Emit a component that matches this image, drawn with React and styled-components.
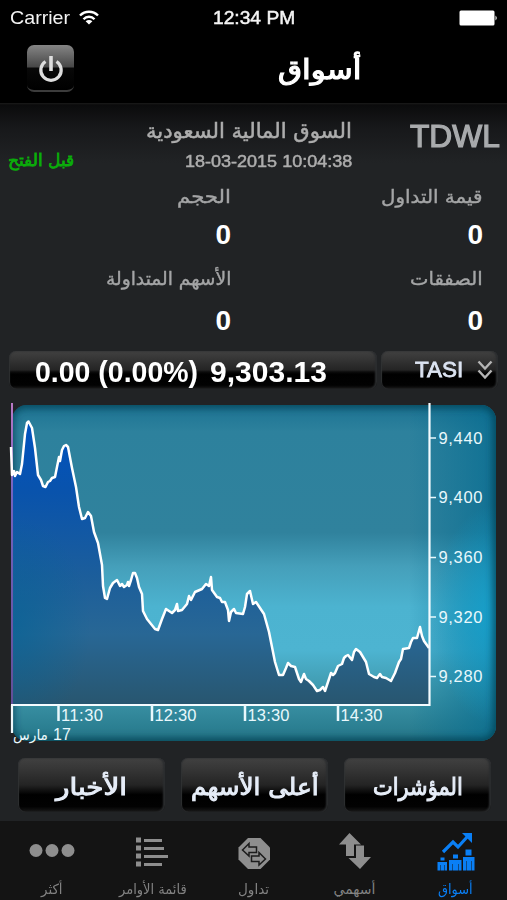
import React, { useLayoutEffect, useRef, useState } from "react";
import styled, { createGlobalStyle } from "styled-components";

const GlobalStyle = createGlobalStyle`
  * {
    box-sizing: border-box;
  }
  body {
    margin: 0;
    background: #212325;
    font-family: "Liberation Sans", "DejaVu Sans", sans-serif;
  }
`;

const Screen = styled.div`
  width: 507px;
  height: 900px;
  overflow: hidden;
  display: flex;
  flex-direction: column;
  background: #212325;
`;

const FitBox = styled.span`
  display: block;
  flex: none;
  width: ${({ $width }) => $width}px;
  white-space: nowrap;
  font-family: ${({ $arabic }) =>
    $arabic
      ? '"DejaVu Sans", sans-serif'
      : '"Liberation Sans", Arial, sans-serif'};
  font-size: ${({ $size }) => $size}px;
  font-weight: ${({ $bold }) => ($bold ? 700 : 400)};
  -webkit-text-stroke: ${({ $stroke }) => $stroke || 0}px currentColor;
`;

const FitInner = styled.span`
  display: inline-block;
  transform-origin: left center;
`;

// Squeezes a label horizontally so that it always takes the given width
const Fit = ({ width, size, bold, stroke, arabic, children }) => {
  const ref = useRef(null);
  const [scale, setScale] = useState(1);
  useLayoutEffect(() => {
    setScale(width / ref.current.offsetWidth);
  }, [width, children]);
  return (
    <FitBox
      dir="ltr"
      $width={width}
      $size={size}
      $bold={bold}
      $stroke={stroke}
      $arabic={arabic}
    >
      <FitInner
        ref={ref}
        dir={arabic ? "rtl" : "ltr"}
        style={{ transform: `scaleX(${scale})` }}
      >
        {children}
      </FitInner>
    </FitBox>
  );
};

const StatusBar = styled.div`
  display: grid;
  grid-template-columns: 1fr 82px 1fr;
  align-items: center;
  height: 36px;
  padding: 0 9px 0 10px;
  background: #000;
  color: #f4f4f4;
  line-height: 36px;
`;

const Carrier = styled.div`
  display: flex;
  align-items: center;
  gap: 9px;
`;

const Battery = styled.svg`
  justify-self: end;
`;

const NavBar = styled.div`
  display: flex;
  align-items: center;
  justify-content: space-between;
  height: 67px;
  padding: 0 145px 0 27px;
  background: #000;
  color: #fff;
  line-height: 67px;
`;

const PowerButton = styled.button`
  width: 47px;
  height: 47px;
  margin-bottom: 2px;
  padding: 0;
  border: 0;
  border-bottom: 2px solid #3c3c3c;
  border-radius: 7px;
  display: flex;
  align-items: center;
  justify-content: center;
  background: linear-gradient(#858585, #484848 48%, #080808 52%, #000);
`;

const Market = styled.div`
  height: 73px;
  padding: 13px 7px 0 8px;
  display: flex;
  background: linear-gradient(#1b1b1b 0, #0b0b0c 2px, #17181a 24px, #212325 60px);
  color: #adadad;
  line-height: 30px;
`;

const MarketState = styled.div`
  width: 139px;
  padding-top: 30px;
  color: #0cae0c;
`;

const MarketName = styled.div`
  width: 205px;
  display: flex;
  flex-direction: column;
  align-items: flex-end;
`;

const MarketCode = styled.div`
  margin-left: auto;
  color: #a9abad;
  line-height: 41px;
`;

const Stats = styled.div`
  height: 175px;
  padding: 0 24px 0 8px;
  display: grid;
  grid-template-columns: 223px 1fr;
  grid-template-rows: 82px 93px;
`;

const Stat = styled.div`
  display: flex;
  flex-direction: column;
  align-items: flex-end;
  color: #a4a5a6;
  line-height: 42px;
`;

const StatValue = styled.div`
  margin-top: ${({ $drop }) => $drop || 0}px;
  color: #fff;
  font-size: 28px;
  font-weight: 700;
  line-height: 33px;
`;

const Gloss = styled.div`
  border-radius: 7px;
  background: linear-gradient(
    #414141,
    #363636 20%,
    #242424 50%,
    #0c0c0c ${({ $break }) => $break || 55}%,
    #000 ${({ $break }) => ($break || 55) + 6}%,
    #020202 90%,
    #191919
  );
  box-shadow: inset 1px 0 1px #303234, inset -2px 0 2px #2b2d2f;
`;

const IndexRow = styled.div`
  height: 38px;
  padding: 0 9px;
  display: flex;
  gap: 4px;
`;

const IndexValue = styled(Gloss)`
  width: 368px;
  padding-left: 26px;
  display: flex;
  gap: 12px;
  color: #fff;
  line-height: 42px;
`;

const IndexPicker = styled(Gloss)`
  flex: 1;
  padding: 0 5px 0 34px;
  display: flex;
  align-items: center;
  justify-content: space-between;
  color: #dce4f2;
  line-height: 38px;
`;

const ChartSvg = styled.svg`
  display: block;
  flex: none;
`;

const Actions = styled.div`
  height: 63px;
  padding: 0 16px 9px 18px;
  display: flex;
  justify-content: space-between;
  background: #212325;
`;

const Action = styled(Gloss)`
  width: 147px;
  display: flex;
  justify-content: center;
  color: #e6edf8;
  line-height: 58px;
`;

const TabBar = styled.div`
  height: 79px;
  padding-top: 7px;
  display: grid;
  grid-template-columns: repeat(5, 101px);
  justify-content: center;
  background: #141414;
`;

const Tab = styled.div`
  display: flex;
  flex-direction: column;
  align-items: center;
  color: ${({ $active }) => ($active ? "#0a7ff5" : "#828282")};
  line-height: 24px;
  > svg {
    margin-bottom: 5px;
  }
`;

const STATS = [
  { label: "الحجم", width: 54, value: "0" },
  { label: "قيمة التداول", width: 102, value: "0" },
  { label: "الأسهم المتداولة", width: 125, value: "0", drop: 4 },
  { label: "الصفقات", width: 73, value: "0", drop: 4 },
];

const ACTIONS = [
  { label: "الأخبار", width: 71 },
  { label: "أعلى الأسهم", width: 127 },
  { label: "المؤشرات", width: 90 },
];

const MoreIcon = () => (
  <svg width="48" height="44" viewBox="0 0 48 44" fill="#8e8e8e">
    <circle cx="8" cy="22.500" r="6.500" />
    <circle cx="24" cy="22.500" r="6.500" />
    <circle cx="40" cy="22.500" r="6.500" />
  </svg>
);

const OrdersIcon = () => (
  <svg width="36" height="44" viewBox="0 0 36 44" fill="#8e8e8e">
    <path d="M1 9.500h5v5h-5zM1 17.500h5v5h-5zM1 25.500h5v5h-5zM1 33.500h5v5h-5z" />
    <path d="M9 11h18v3H9zM9 19h20v3H9zM9 27h24v3H9zM9 35h18v3H9z" />
  </svg>
);

const TradeIcon = () => (
  <svg width="34" height="44" viewBox="0 0 34 44">
    <path
      d="M11 10h12.500l9.500 9.500v12l-9.500 9.500H11L1.500 31.500v-12z"
      fill="#8e8e8e"
    />
    <g fill="#8e8e8e" stroke="#1c1c1c" strokeWidth="1.500">
      <path d="M5.500 22l6.500-6.500v3.500h7.500v5.500H12v3.500z" />
      <path d="M28.500 31l-6.500-6.500V28h-7.500v5.500H22V37z" />
    </g>
  </svg>
);

const SharesIcon = () => (
  <svg width="34" height="44" viewBox="0 0 34 44" fill="#8e8e8e">
    <path d="M11.500 5L23 16.500h-7V28H8V16.500H1z" />
    <path d="M18 17.500h8V29h7L22 41 10.500 30H18z" />
  </svg>
);

const MarketsIcon = () => (
  <svg width="38" height="44" viewBox="0 0 38 44" fill="#0a7ff5">
    <path
      d="M6 24l10-10 5 5L31 8"
      fill="none"
      stroke="#0a7ff5"
      strokeWidth="3.200"
    />
    <path d="M25 5h10v10z" />
    <path d="M3.500 29.500h4v3h-4zM16 26.500h5v4h-5zM28.500 21.500h6v6h-6z" />
    <path d="M.5 34H10v8.500H8V37h-.5v5.500h-4V37H3v5.500H.5z" />
    <path d="M12 32h12.500v10.500H22V36h-.5v6.500h-6V36H15v6.500h-3z" />
    <path d="M26 29h11.500v13.500H35V33h-.5v9.500h-5V33H29v9.500h-3z" />
  </svg>
);

const TABS = [
  { label: "أكثر", width: 22, Icon: MoreIcon },
  { label: "قائمة الأوامر", width: 68, Icon: OrdersIcon },
  { label: "تداول", width: 31, Icon: TradeIcon },
  { label: "أسهمي", width: 42, Icon: SharesIcon },
  { label: "أسواق", width: 35, Icon: MarketsIcon, active: true },
];

const LINE =
  "11,447 12,475 14,471 15,476 17,472 20,474 22,464 25,434 27,423 28.5,421.5 32,428 35,448 38,475 41,480 43,486 45.5,487 48,482 50,481 52,478 55,477 58,462 59,457 60,461 62,450 64,446 66,445 68,447 72,468 76,487 79,507 82,519 85,518 88,512 91,516 94,532 98,543 102,565 103,586 105,598 107,599 110,588 113,583 117,580 120,586 122,584 124,587 127,585 128,582 129,586 131,580 133,573 135,573 137,578 139,587 142,594 143,611 147,619 151,624 155,629 158,630 162,619 166,609 172,613 175,610 177,604 178,611 182,610 187,604 189,596 191,600 195,592 202,589 206,584 209,586 211,577 212,590 217,597 220,598 222,602 225,602 228,610 229,621 231,612 234,609 236,613 243,614 245,607 247,594 250,591 253,604 256,602 260,608 264,614 269,632 275,662 279,675 283,675 286,668 288,663 291,666 295,667 299,679 301,682 304,674 306,679 309,681 313,685 317,691 320,690 323,687 325,691 328,682 331,673 333,675 335,673 338,666 342,664 344,658 346,656 348,655 352,660 354,652 356,649 360,652 363,657 366,662 369,674 374,677 377,678 380,674 382,677 386,678 391,681 395,673 399,662 401,659 403,649 409,648 411,642 413,638 417,638 420,627 422,636 424,641 429,648";

const PRICES = [
  ["9,440", 438],
  ["9,400", 497.5],
  ["9,360", 557.5],
  ["9,320", 617],
  ["9,280", 676.5],
];

const TIMES = [
  ["11:30", 58.5],
  ["12:30", 152],
  ["13:30", 245],
  ["14:30", 338],
];

const Chart = () => (
  <ChartSvg width="507" height="369" viewBox="0 389 507 369">
    <defs>
      <linearGradient id="panel" x1="0" y1="0" x2="0" y2="1">
        <stop offset="0" stopColor="#1c7392" />
        <stop offset="0.08" stopColor="#2d819d" />
        <stop offset="0.38" stopColor="#30829d" />
        <stop offset="0.48" stopColor="#459fba" />
        <stop offset="0.6" stopColor="#4cb3d0" />
        <stop offset="0.73" stopColor="#4db4d1" />
        <stop offset="0.85" stopColor="#3f98ac" />
        <stop offset="1" stopColor="#247688" />
      </linearGradient>
      <linearGradient id="side" x1="0" y1="0" x2="1" y2="0">
        <stop offset="0.82" stopColor="#00698f" stopOpacity="0" />
        <stop offset="1" stopColor="#00698f" stopOpacity="0.65" />
      </linearGradient>
      <radialGradient
        id="glow"
        gradientUnits="userSpaceOnUse"
        cx="0"
        cy="0"
        r="1"
        gradientTransform="translate(496 615) scale(64 110)"
      >
        <stop offset="0" stopColor="#16a3cf" stopOpacity="0.95" />
        <stop offset="1" stopColor="#16a3cf" stopOpacity="0" />
      </radialGradient>
      <linearGradient id="area" x1="0" y1="421" x2="0" y2="705" gradientUnits="userSpaceOnUse">
        <stop offset="0" stopColor="#0052c0" />
        <stop offset="0.25" stopColor="#0953ac" />
        <stop offset="0.55" stopColor="#1c5e9b" />
        <stop offset="0.75" stopColor="#286795" />
        <stop offset="1" stopColor="#28566f" />
      </linearGradient>
      <radialGradient
        id="areaGlow"
        gradientUnits="userSpaceOnUse"
        cx="0"
        cy="0"
        r="1"
        gradientTransform="translate(11 625) scale(80 110)"
      >
        <stop offset="0" stopColor="#006296" stopOpacity="0.6" />
        <stop offset="1" stopColor="#006296" stopOpacity="0" />
      </radialGradient>
      <linearGradient id="open" x1="0" y1="403" x2="0" y2="705" gradientUnits="userSpaceOnUse">
        <stop offset="0" stopColor="#b978c4" />
        <stop offset="0.3" stopColor="#7463bf" />
        <stop offset="1" stopColor="#624f97" />
      </linearGradient>
      <clipPath id="clip">
        <rect x="12" y="405" width="484" height="336" rx="15" />
      </clipPath>
      <filter id="soft" x="-10%" y="-10%" width="120%" height="120%">
        <feGaussianBlur stdDeviation="4" />
      </filter>
    </defs>
    <g clipPath="url(#clip)">
      <rect x="11" y="405" width="485" height="336" fill="url(#panel)" />
      <rect x="11" y="405" width="485" height="336" fill="url(#side)" />
      <rect x="420" y="405" width="76" height="336" fill="url(#glow)" />
      <rect
        x="9"
        y="403"
        width="489"
        height="340"
        rx="16"
        fill="none"
        stroke="#053e50"
        strokeWidth="8"
        filter="url(#soft)"
      />
    </g>
    <polygon points={`${LINE} 429,705 11,705`} fill="url(#area)" />
    <polygon points={`${LINE} 429,705 11,705`} fill="url(#areaGlow)" />
    <path d="M12 403V705" stroke="url(#open)" strokeWidth="2" />
    <polyline points={LINE} fill="none" stroke="#fff" strokeWidth="2.5" strokeLinejoin="round" />
    <path d="M429.500 403V706M11 705H430.500" stroke="#f5fcff" strokeWidth="2.200" />
    <path d="M12 705V733" stroke="#f0f8fa" strokeWidth="2.200" />
    <g fill="#e9f8fc" fontFamily="Liberation Sans, Arial, sans-serif" fontSize="16.5">
      {PRICES.map(([label, y]) => (
        <g key={label}>
          <path d={`M430 ${y}h6`} stroke="#e9f8fc" strokeWidth="1.500" />
          <text x="438.500" y={y + 5.8} textLength="44">
            {label}
          </text>
        </g>
      ))}
      {TIMES.map(([label, x]) => (
        <g key={label}>
          <path d={`M${x} 705v16`} stroke="#e9f8fc" strokeWidth="2.500" />
          <text x={x + 2.5} y="721" textLength="42">
            {label}
          </text>
        </g>
      ))}
      <text x="53" y="740" fontSize="16">
        17
      </text>
      <text x="13" y="740" fontSize="15" fontFamily="DejaVu Sans, sans-serif" textLength="35" lengthAdjust="spacingAndGlyphs">
        مارس
      </text>
    </g>
  </ChartSvg>
);

export default function App() {
  return (
    <Screen>
      <GlobalStyle />
      <StatusBar>
        <Carrier>
          <Fit width={60} size={19}>
            Carrier
          </Fit>
          <svg width="20" height="16" viewBox="0 0 20 16" fill="none" stroke="#fff" strokeWidth="2.4">
            <path d="M1 5.500C6 .5 14 .5 19 5.500" />
            <path d="M4.500 9.200c3-3.200 8-3.200 11 0" />
            <path d="M10 14.500L6.600 11.300c2-1.700 4.800-1.700 6.800 0z" fill="#fff" stroke="none" />
          </svg>
        </Carrier>
        <Fit width={82} size={18.5} stroke={0.5}>
          12:34 PM
        </Fit>
        <Battery width="39" height="16" viewBox="0 0 39 16" fill="#fff">
          <rect x="0.500" y="0.500" width="35" height="15" rx="1.500" />
          <path d="M36.500 5.500q2.500 2.500 0 5z" />
        </Battery>
      </StatusBar>
      <NavBar>
        <PowerButton aria-label="power">
          <svg width="28" height="30" viewBox="0 0 28 30" fill="none" stroke="#dedede" strokeWidth="3.2">
            <path d="M8.500 8.500a10.200 10.200 0 1 0 11 0" />
            <path d="M14 3v15" strokeWidth="3.600" />
          </svg>
        </PowerButton>
        <Fit arabic width={84} size={27} stroke={1.2}>
          أسواق
        </Fit>
      </NavBar>
      <Market>
        <MarketState>
          <Fit arabic width={66} size={16.5} stroke={0.8}>
            قبل الفتح
          </Fit>
        </MarketState>
        <MarketName>
          <Fit arabic width={206} size={20.5} stroke={0.5}>
            السوق المالية السعودية
          </Fit>
          <Fit width={167} size={16.5} stroke={0.5}>
            18-03-2015 10:04:38
          </Fit>
        </MarketName>
        <MarketCode>
          <Fit width={90} size={31} stroke={1.2}>
            TDWL
          </Fit>
        </MarketCode>
      </Market>
      <Stats>
        {STATS.map(({ label, width, value, drop }) => (
          <Stat key={label}>
            <Fit arabic width={width} size={18.5} stroke={0.4}>
              {label}
            </Fit>
            <StatValue $drop={drop}>{value}</StatValue>
          </Stat>
        ))}
      </Stats>
      <IndexRow>
        <IndexValue>
          <Fit bold width={163} size={29}>
            0.00 (0.00%)
          </Fit>
          <Fit bold width={117} size={29}>
            9,303.13
          </Fit>
        </IndexValue>
        <IndexPicker>
          <Fit width={48} size={22} stroke={0.8}>
            TASI
          </Fit>
          <svg width="16" height="20" viewBox="0 0 16 20" fill="none" stroke="#b5b5b5" strokeWidth="2.4">
            <path d="M1.500 1.500L8 8.500l6.500-7M1.500 10.500L8 17.500l6.500-7" />
          </svg>
        </IndexPicker>
      </IndexRow>
      <Chart />
      <Actions>
        {ACTIONS.map(({ label, width }) => (
          <Action key={label} $break={62}>
            <Fit arabic width={width} size={23.5} stroke={1}>
              {label}
            </Fit>
          </Action>
        ))}
      </Actions>
      <TabBar>
        {TABS.map(({ label, width, Icon, active }) => (
          <Tab key={label} $active={active}>
            <Icon />
            <Fit arabic width={width} size={14}>
              {label}
            </Fit>
          </Tab>
        ))}
      </TabBar>
    </Screen>
  );
}
